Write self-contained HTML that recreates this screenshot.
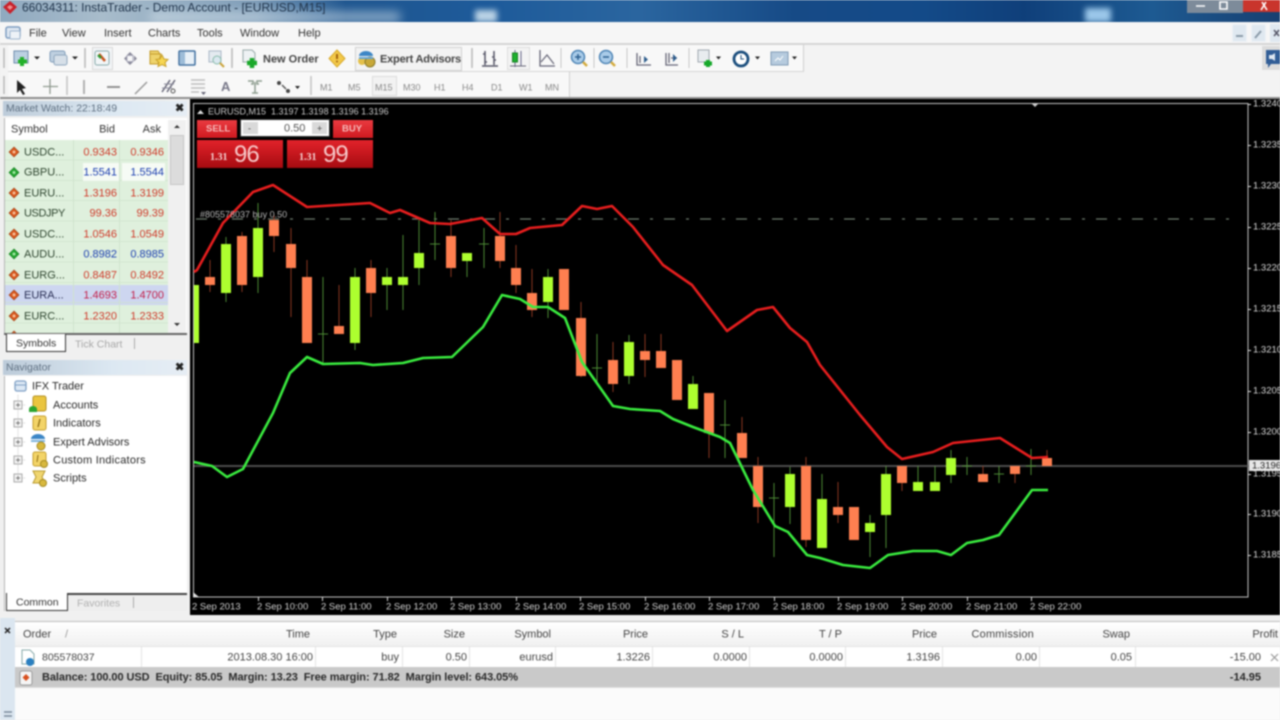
<!DOCTYPE html>
<html><head><meta charset="utf-8"><title>InstaTrader</title>
<style>
html,body{margin:0;padding:0;width:1280px;height:720px;overflow:hidden;background:#f2f2f2}
#w{position:absolute;left:0;top:0;width:1280px;height:720px;overflow:hidden;filter:blur(.7px);font-family:"Liberation Sans",sans-serif;font-size:11px;color:#333;background:#f2f2f2}
.b{position:absolute}
.t{position:absolute;white-space:nowrap;line-height:12px}
.c{transform:translateY(-5.5px)}
svg{position:absolute;left:0;top:0}
</style></head><body><div id="w">

<!-- title bar -->
<div class="b" style="left:0;top:0;width:1280px;height:22px;background:linear-gradient(90deg,#8fa9bf 0,#a8bccb 8%,#7f9db8 20%,#1f568f 27%,#1d5a9a 38%,#2a659f 50%,#164a86 62%,#134a88 72%,#0f3f7a 80%,#1d5a92 90%,#173f70 100%)"></div>
<div class="b" style="left:150px;top:12px;width:250px;height:10px;background:#d9e6ee;filter:blur(5px);opacity:.6"></div>
<div class="b" style="left:475px;top:10px;width:22px;height:12px;background:#bcd4e6;filter:blur(3px)"></div>
<div class="b" style="left:1085px;top:8px;width:26px;height:14px;background:#9cc8ea;filter:blur(3px)"></div>
<div class="b" style="left:1187px;top:0;width:56px;height:13px;background:#7d8b9a"></div>
<div class="b" style="left:1243px;top:0;width:37px;height:12px;background:#c9352c"></div>
<svg width="1280" height="22">
<path d="M10 1l7 6-7 7-7-7z" fill="#c8202a"/><path d="M10 5l3 2-3 3-3-3z" fill="#ef8d8d"/>
<path d="M1196 6h9M1220 2h7v7h-7zM1262 2l5 8M1266 2l-5 8" stroke="#fff" stroke-width="1.6" fill="none"/>
</svg>
<div class="t c" style="left:22px;top:7px;font-size:12px;color:#22364d">66034311: InstaTrader - Demo Account - [EURUSD,M15]</div>

<!-- menu -->
<div class="b" style="left:0;top:22px;width:1280px;height:21px;background:#f6f6f6;border-bottom:2px solid #d5d5d5;box-sizing:content-box"></div>
<div class="t c" style="left:29px;top:33px;font-size:11px">File</div>
<div class="t c" style="left:62px;top:33px;font-size:11px">View</div>
<div class="t c" style="left:104px;top:33px;font-size:11px">Insert</div>
<div class="t c" style="left:148px;top:33px;font-size:11px">Charts</div>
<div class="t c" style="left:197px;top:33px;font-size:11px">Tools</div>
<div class="t c" style="left:240px;top:33px;font-size:11px">Window</div>
<div class="t c" style="left:298px;top:33px;font-size:11px">Help</div>
<div class="b" style="left:1232px;top:24px;width:15px;height:18px;background:#dfe8f0;border:1px solid #eef2f6;box-sizing:border-box"></div>
<div class="b" style="left:1251px;top:24px;width:15px;height:18px;background:#dfe8f0;border:1px solid #eef2f6;box-sizing:border-box"></div>
<div class="b" style="left:1270px;top:24px;width:10px;height:18px;background:#dfe8f0"></div>

<!-- toolbar backgrounds -->
<div class="b" style="left:0;top:45px;width:1280px;height:53px;background:#f3f3f3"></div>
<div class="b" style="left:8px;top:45px;width:796px;height:27px;background:#f8f8f8;border-right:1px solid #cfcfcf;border-bottom:1px solid #d6d6d6;box-sizing:border-box"></div>
<div class="b" style="left:8px;top:72px;width:562px;height:26px;background:#f8f8f8;border-right:1px solid #d0d0d0;box-sizing:border-box"></div>
<div class="b" style="left:0;top:97px;width:1280px;height:2px;background:#8e8e8e"></div>
<div class="b" style="left:355px;top:47px;width:107px;height:24px;background:#f3f3f3;border:1px solid #d2d2d2;box-sizing:border-box"></div>
<div class="b" style="left:92px;top:47px;width:21px;height:23px;background:#f2f4f6;border:1px solid #dadada;box-sizing:border-box"></div>
<div class="b" style="left:507px;top:47px;width:23px;height:23px;background:#f3f3f3;border:1px solid #dcdcdc;box-sizing:border-box"></div>
<div class="b" style="left:372px;top:76px;width:25px;height:20px;background:#f2f2f2;border:1px solid #dcdcdc;box-sizing:border-box"></div>
<div class="b" style="left:1262px;top:46px;width:18px;height:24px;background:#dcdcdc"></div>

<!-- icons -->
<svg width="1280" height="100" fill="none">
<rect x="6" y="27" width="14" height="11" rx="2" stroke="#7d9cc0" stroke-width="1.5" fill="#dfe8f2"/><rect x="10" y="31" width="10" height="8" rx="1" stroke="#9db4cd" fill="#edf2f7"/>
<path d="M4 48V68" stroke="#b8b8b8" stroke-width="1.5"/>
<rect x="14" y="51" width="14" height="12" fill="#bcd0e2" stroke="#6d8cab"/><path d="M22 57v9M18 61.5h9" stroke="#22b02a" stroke-width="4"/>
<path d="M34 56.5h6l-3 3z" fill="#222"/>
<rect x="50" y="51" width="15" height="11" rx="2" fill="#bfd0e0" stroke="#7e9bb8"/><rect x="54" y="55" width="13" height="10" rx="2" fill="#d6dfe8" stroke="#8ea6bd"/>
<path d="M72 56.5h6l-3 3z" fill="#222"/>
<path d="M85 48V68" stroke="#b8b8b8" stroke-width="1.5"/>
<rect x="95" y="51" width="14" height="14" rx="2" stroke="#8aa" fill="#f2f6f8"/><path d="M99 54l6 7" stroke="#c8541e" stroke-width="2.5"/><path d="M98 55l3 3" stroke="#2c9a35" stroke-width="2.5"/>
<path d="M130 52l3 3h-6zM130 65l3-3h-6zM124 58.5l3-3v6zM137 58.5l-3-3v6z" fill="#889"/><rect x="127" y="55.5" width="6" height="6" stroke="#aab"/>
<path d="M150 51h8l2 3h-10zM150 54h11l-3 10h-8z" fill="#eed36c" stroke="#c49b2a"/><path d="M162 55l2 4 4 .5-3 3 1 4-4-2-4 2 1-4-3-3 4-.5z" fill="#f6d652" stroke="#c8a02a"/>
<rect x="179" y="51" width="16" height="14" rx="1" fill="#e8f0f7" stroke="#3f6f9f" stroke-width="1.5"/><rect x="180" y="52" width="5" height="12" fill="#9dbcd8"/>
<rect x="209" y="51" width="12" height="11" fill="#e4eaf0" stroke="#a9b8c6"/><circle cx="217" cy="60" r="4" stroke="#8ba" fill="#dbe8f0"/><path d="M220 63l4 4" stroke="#c9a23a" stroke-width="2"/>
<path d="M232 48V68" stroke="#b8b8b8" stroke-width="1.5"/>
<path d="M243 50h9l3 3v9h-12z" fill="#eef2f4" stroke="#9aa"/><path d="M252 58v10M247 63h10" stroke="#1aa82a" stroke-width="4.5"/>
<path d="M337 50l8 8.5-8 8.5-8-8.5z" fill="#f2c84a" stroke="#d8a928"/><path d="M337 54v5" stroke="#a0620c" stroke-width="2"/><circle cx="337" cy="61.5" r="1" fill="#a0620c"/>
<path d="M359 56a7 5 0 0 1 14 0z" fill="#3c86c6"/><circle cx="362" cy="61" r="4" fill="#e4c04a"/><circle cx="370" cy="62" r="5" fill="#c8a838" stroke="#8a7a28"/><path d="M359 58h14" stroke="#63a5d8" stroke-width="2"/>
<path d="M472 48V68" stroke="#b8b8b8" stroke-width="1.5"/>
<path d="M485 51v14M483 54h2M485 62h2M494 51v14M492 57h2M494 60h2M482 66h16" stroke="#556" stroke-width="1.5"/>
<path d="M515 50v17M521 51v15" stroke="#668"/><rect x="512.5" y="53" width="5" height="9" fill="#1db12d" stroke="#167f22"/><path d="M510 66h16" stroke="#667"/>
<path d="M540 50v16h15" stroke="#667" stroke-width="1.3"/><path d="M541 62l6-7 7 9" stroke="#667" stroke-width="1.2"/>
<path d="M561 48V68M594 48V68M627 48V68M689 48V68" stroke="#c6c6c6"/>
<circle cx="578" cy="57" r="6.5" fill="#a9cbe8" stroke="#4d84b5" stroke-width="1.5"/><path d="M575 57h6M578 54v6" stroke="#2b5f8f" stroke-width="1.5"/><path d="M583 62l4 4" stroke="#d3aa3c" stroke-width="2.5"/>
<circle cx="606" cy="57" r="6.5" fill="#a9cbe8" stroke="#4d84b5" stroke-width="1.5"/><path d="M603 57h6" stroke="#2b5f8f" stroke-width="1.5"/><path d="M611 62l4 4" stroke="#d3aa3c" stroke-width="2.5"/>
<path d="M637 53v12h14M640 56v7" stroke="#667" stroke-width="1.3"/><path d="M644 56l4 3.5-4 3.5z" fill="#2d5c8c"/>
<path d="M666 53v12h12M669 53v10M671 58h6" stroke="#667" stroke-width="1.3"/><path d="M673 54l4 4-4 4z" fill="#2d5c8c"/>
<rect x="698" y="50" width="11" height="12" fill="#e8ecef" stroke="#a0a8b0"/><path d="M708 60v7M704 63.5h8" stroke="#16a82a" stroke-width="4"/>
<path d="M716 56.5h5l-2.5 3z" fill="#222"/>
<circle cx="741" cy="59" r="7" fill="#fff" stroke="#1b4e7d" stroke-width="2.8"/><path d="M741 55v4h3" stroke="#1b4e7d"/>
<path d="M755 56.5h5l-2.5 3z" fill="#222"/>
<rect x="771" y="52" width="17" height="13" fill="#b6cbde" stroke="#7f9ab4"/><path d="M775 61l3-3 2 2 3-4" stroke="#fff"/>
<path d="M792 56.5h5l-2.5 3z" fill="#222"/>
<path d="M4 76V94" stroke="#b8b8b8" stroke-width="1.5"/>
<path d="M17 80l0 13 3-3 3 5 2-1-3-5 4-1z" fill="#222"/>
<path d="M50 79v15M43 86.5h15" stroke="#8f9a8f" stroke-width="1.3"/>
<path d="M67 76V95" stroke="#c2c2c2" stroke-width="1.5"/>
<path d="M84 80v14" stroke="#aaa" stroke-width="1.8"/>
<path d="M107 87h13" stroke="#888" stroke-width="1.8"/>
<path d="M135 94l12-12" stroke="#999" stroke-width="1.5"/>
<path d="M162 92l8-12M167 92l8-12" stroke="#667" stroke-width="1.5"/><path d="M162 88h10M164 84h10" stroke="#889"/><circle cx="173" cy="91" r="2" stroke="#555"/>
<path d="M191 80h14M191 84h14M191 88h14M191 92h8" stroke="#bdbdbd" stroke-width="1.5"/><path d="M201 92h5l-2.5 3z" fill="#667"/>
<path d="M248 81h5v3h-2M262 81h-5v3h2M255 82v11M252 93h6" stroke="#8e9d90" stroke-width="1.5"/>
<circle cx="279" cy="83" r="2" fill="#444"/><circle cx="288" cy="91" r="2" fill="#444"/><path d="M282 85l4 4" stroke="#555" stroke-width="1.5"/>
<path d="M295 86h5l-2.5 3z" fill="#222"/>
<path d="M311 76V95" stroke="#c2c2c2" stroke-width="1.5"/>
<path d="M1266 50h14v14h-9l-3 4v-4h-2z" fill="#315d96"/><path d="M1269 55h3l3-2v8l-3-2h-3z" fill="#dfe8f2"/>
<path d="M1236 36h7M1255 38l6-7" stroke="#8a9aa8" stroke-width="2"/><path d="M1274 30l5 6M1279 30l-5 6" stroke="#556" stroke-width="1.5"/>
</svg>
<div class="t c" style="left:263px;top:59px;font-size:11px;font-weight:bold;color:#444">New Order</div>
<div class="t c" style="left:380px;top:59px;font-size:11px;font-weight:bold;color:#444;letter-spacing:-.2px">Expert Advisors</div>
<div class="t c" style="left:225px;top:87px;font-size:13px;font-weight:bold;color:#778;transform:translate(-4px,-6px)">A</div>
<div class="t c" style="left:320px;top:87px;font-size:9px;color:#888">M1</div>
<div class="t c" style="left:348px;top:87px;font-size:9px;color:#888">M5</div>
<div class="t c" style="left:375px;top:87px;font-size:9px;color:#888">M15</div>
<div class="t c" style="left:403px;top:87px;font-size:9px;color:#888">M30</div>
<div class="t c" style="left:434px;top:87px;font-size:9px;color:#888">H1</div>
<div class="t c" style="left:462px;top:87px;font-size:9px;color:#888">H4</div>
<div class="t c" style="left:491px;top:87px;font-size:9px;color:#888">D1</div>
<div class="t c" style="left:519px;top:87px;font-size:9px;color:#888">W1</div>
<div class="t c" style="left:545px;top:87px;font-size:9px;color:#888">MN</div>

<!-- market watch -->
<div class="b" style="left:0;top:99px;width:190px;height:521px;background:#f0f0f0"></div>
<div class="b" style="left:3px;top:101px;width:184px;height:15px;background:linear-gradient(90deg,#bccbd9,#dce8f2 60%,#e6edf4)"></div>
<div class="t c" style="left:6px;top:108px;font-size:10.5px;color:#5f7082">Market Watch: 22:18:49</div>
<div class="t c" style="left:175px;top:108px;font-size:11px;font-weight:bold;color:#222">&#10006;</div>
<div class="b" style="left:4px;top:118px;width:183px;height:217px;background:#fff;border-left:1px solid #b5b5b5;box-sizing:border-box"></div>
<div class="t c" style="left:11px;top:129px">Symbol</div>
<div class="t c" style="right:1165px;top:129px">Bid</div>
<div class="t c" style="right:1119px;top:129px">Ask</div>
<div class="b" style="left:5px;top:140px;width:163px;height:195px;background:#dff0dd"></div>
<div class="b" style="left:5px;top:285px;width:163px;height:20px;background:#cdd6f0"></div>
<div class="b" style="left:5px;top:140px;width:163px;height:195px;background:repeating-linear-gradient(180deg,transparent 0,transparent 19.4px,#cfe3cd 19.4px,#cfe3cd 20.4px);opacity:.8"></div>
<div class="b" style="left:73px;top:140px;width:1px;height:195px;background:#cfe3cd"></div>
<div class="b" style="left:119px;top:140px;width:1px;height:195px;background:#cfe3cd"></div>
<div class="b" style="left:168px;top:120px;width:18px;height:214px;background:#f0f0f0"></div>
<div class="b" style="left:170px;top:135px;width:14px;height:50px;background:#dcdcdc;border:1px solid #c6c6c6;box-sizing:border-box"></div>
<svg width="190" height="340" fill="none">
<path d="M174 128l3-3 3 3zM174 323l3 3 3-3z" fill="#333"/>
<g fill="#d9581e" stroke="#9a3a12" stroke-width=".6">
<path d="M14 147l5 5-5 5-5-5z"/><path d="M14 188l5 5-5 5-5-5z"/><path d="M14 208l5 5-5 5-5-5z"/><path d="M14 229l5 5-5 5-5-5z"/><path d="M14 270l5 5-5 5-5-5z"/><path d="M14 290l5 5-5 5-5-5z"/><path d="M14 311l5 5-5 5-5-5z"/><path d="M14 331l4 4h-8z"/>
</g>
<g fill="#23a52f" stroke="#137a1e" stroke-width=".6"><path d="M14 167.5l5 5-5 5-5-5z"/><path d="M14 249l5 5-5 5-5-5z"/></g>
<g fill="#f5c09a"><circle cx="14" cy="152" r="1.5"/><circle cx="14" cy="193" r="1.5"/><circle cx="14" cy="213" r="1.5"/><circle cx="14" cy="234" r="1.5"/><circle cx="14" cy="275" r="1.5"/><circle cx="14" cy="295" r="1.5"/><circle cx="14" cy="316" r="1.5"/></g>
<g fill="#a6e8a6"><circle cx="14" cy="172.5" r="1.5"/><circle cx="14" cy="254" r="1.5"/></g>
</svg>
<div class="t c" style="left:24px;top:152px;font-size:11px;color:#2f4630">USDC...</div>
<div class="t c" style="left:24px;top:172px;font-size:11px;color:#2f4630">GBPU...</div>
<div class="t c" style="left:24px;top:193px;font-size:11px;color:#2f4630">EURU...</div>
<div class="t c" style="left:24px;top:213px;font-size:11px;color:#2f4630;letter-spacing:-.4px">USDJPY</div>
<div class="t c" style="left:24px;top:234px;font-size:11px;color:#2f4630">USDC...</div>
<div class="t c" style="left:24px;top:254px;font-size:11px;color:#2f4630">AUDU...</div>
<div class="t c" style="left:24px;top:275px;font-size:11px;color:#2f4630">EURG...</div>
<div class="t c" style="left:24px;top:295px;font-size:11px;color:#2a2f55">EURA...</div>
<div class="t c" style="left:24px;top:316px;font-size:11px;color:#2f4630">EURC...</div>
<div class="b" style="left:83px;top:163px;width:36px;height:18px;background:#fff;opacity:.7"></div>
<div class="b" style="left:122px;top:163px;width:43px;height:18px;background:#fff;opacity:.7"></div>
<div class="t c" style="right:1163px;top:152px;color:#cf3a2a">0.9343</div><div class="t c" style="right:1116px;top:152px;color:#cf3a2a">0.9346</div>
<div class="t c" style="right:1163px;top:172px;color:#1c3fb0">1.5541</div><div class="t c" style="right:1116px;top:172px;color:#1c3fb0">1.5544</div>
<div class="t c" style="right:1163px;top:193px;color:#cf3a2a">1.3196</div><div class="t c" style="right:1116px;top:193px;color:#cf3a2a">1.3199</div>
<div class="t c" style="right:1163px;top:213px;color:#cf3a2a">99.36</div><div class="t c" style="right:1116px;top:213px;color:#cf3a2a">99.39</div>
<div class="t c" style="right:1163px;top:234px;color:#cf3a2a">1.0546</div><div class="t c" style="right:1116px;top:234px;color:#cf3a2a">1.0549</div>
<div class="t c" style="right:1163px;top:254px;color:#1c3fb0">0.8982</div><div class="t c" style="right:1116px;top:254px;color:#1c3fb0">0.8985</div>
<div class="t c" style="right:1163px;top:275px;color:#cf3a2a">0.8487</div><div class="t c" style="right:1116px;top:275px;color:#cf3a2a">0.8492</div>
<div class="t c" style="right:1163px;top:295px;color:#c21f4a">1.4693</div><div class="t c" style="right:1116px;top:295px;color:#c21f4a">1.4700</div>
<div class="t c" style="right:1163px;top:316px;color:#cf3a2a">1.2320</div><div class="t c" style="right:1116px;top:316px;color:#cf3a2a">1.2333</div>
<!-- MW tabs -->
<div class="b" style="left:4px;top:333px;width:183px;height:2px;background:#666"></div>
<div class="b" style="left:0;top:335px;width:190px;height:22px;background:#f0f0f0"></div>
<div class="b" style="left:6px;top:334px;width:60px;height:18px;background:#fff;border:1px solid #333;border-top:0;box-sizing:border-box"></div>
<div class="t c" style="left:16px;top:343px;font-size:10.5px">Symbols</div>
<div class="t c" style="left:75px;top:344px;font-size:10.5px;color:#a8a8a8">Tick Chart</div>
<div class="b" style="left:134px;top:338px;width:1px;height:11px;background:#aaa"></div>
<!-- navigator -->
<div class="b" style="left:3px;top:360px;width:184px;height:15px;background:linear-gradient(90deg,#bccbd9,#dce8f2 60%,#e6edf4)"></div>
<div class="t c" style="left:6px;top:367px;font-size:10.5px;color:#5f7082">Navigator</div>
<div class="t c" style="left:175px;top:367px;font-size:11px;font-weight:bold;color:#222">&#10006;</div>
<div class="b" style="left:4px;top:376px;width:183px;height:235px;background:#fff;border-left:1px solid #b5b5b5;box-sizing:border-box"></div>
<svg width="190" height="500" fill="none" style="left:0;top:0">
<path d="M18 395V478M18 405h8M18 423h8M18 442h8M18 460h8M18 478h8" stroke="#c8c8c8" stroke-dasharray="1 1"/>
<g fill="#f2f2f2" stroke="#aaa"><rect x="14" y="401" width="8" height="8"/><rect x="14" y="419" width="8" height="8"/><rect x="14" y="438" width="8" height="8"/><rect x="14" y="456" width="8" height="8"/><rect x="14" y="474" width="8" height="8"/></g>
<path d="M16 405h4M18 403v4M16 423h4M18 421v4M16 442h4M18 440v4M16 460h4M18 458v4M16 478h4M18 476v4" stroke="#777"/>
<rect x="15" y="381" width="11" height="10" rx="2" fill="#dce8f4" stroke="#7e9fc4" stroke-width="1.3"/><path d="M15 385h11" stroke="#7e9fc4"/>
<rect x="33" y="396" width="13" height="15" rx="2" fill="#eac53f" stroke="#b3901e"/><path d="M29 409a4 3 0 0 1 8 0v3h-8z" fill="#2aa52f"/>
<rect x="33" y="416" width="13" height="14" rx="2" fill="#f3d468" stroke="#c5a02d"/><path d="M40 419l-2 8" stroke="#8a6a10" stroke-width="1.3"/>
<path d="M31 439a7 5 0 0 1 14 0z" fill="#3c86c6"/><path d="M31 441h14" stroke="#7eb4dd" stroke-width="2"/><circle cx="41" cy="446" r="4" fill="#d8b83e" stroke="#a58a20"/>
<rect x="33" y="452" width="13" height="14" rx="2" fill="#f3d468" stroke="#c5a02d"/><circle cx="44" cy="464" r="3.5" fill="#d8b83e" stroke="#a58a20"/><path d="M38 455l-1 7" stroke="#8a6a10"/>
<path d="M33 471h12l-3 6 3 6H33l3-6z" fill="#f0d670" stroke="#b99a2e"/><circle cx="43" cy="483" r="3.5" fill="#d8b83e" stroke="#a58a20"/>
</svg>
<div class="t c" style="left:32px;top:386px;font-size:11px;color:#2a2a2a">IFX Trader</div>
<div class="t c" style="left:53px;top:405px;font-size:11px;color:#2a2a2a">Accounts</div>
<div class="t c" style="left:53px;top:423px;font-size:11px;color:#2a2a2a">Indicators</div>
<div class="t c" style="left:53px;top:442px;font-size:11px;color:#2a2a2a">Expert Advisors</div>
<div class="t c" style="left:53px;top:460px;font-size:11px;color:#2a2a2a;letter-spacing:.25px">Custom Indicators</div>
<div class="t c" style="left:53px;top:478px;font-size:11px;color:#2a2a2a">Scripts</div>
<div class="b" style="left:67px;top:593px;width:120px;height:2px;background:#444"></div>
<div class="b" style="left:68px;top:595px;width:119px;height:16px;background:#eeeeee"></div>
<div class="b" style="left:6px;top:593px;width:62px;height:18px;background:#fff;border:1px solid #333;border-top:0;box-sizing:border-box"></div>
<div class="t c" style="left:16px;top:602px;font-size:10.5px">Common</div>
<div class="t c" style="left:77px;top:603px;font-size:10.5px;color:#b0b0b0">Favorites</div>
<div class="b" style="left:133px;top:597px;width:1px;height:11px;background:#aaa"></div>

<!-- chart -->
<div class="b" style="left:190px;top:99px;width:1090px;height:516px;background:#000"></div>
<svg width="1280" height="620" fill="none">
<path d="M193.5 103.5H1248V597H193.5z" stroke="#c4c4c4"/>
<path d="M197 114l3.5-4 3.5 4z" fill="#ddd"/>
<path d="M1031 103h8l-4 4z" fill="#ccc"/><path d="M193 592l6 5h-6z" fill="#ddd"/>
<path d="M196 219H1240" stroke="#6d7a6d" stroke-width="1.3" stroke-dasharray="11 11 3 11"/>
<path d="M194 466H1248" stroke="#4c4c4c" stroke-width="2"/>
<path stroke="#8a3520" d="M210 260V292M242 232V292M274 215V252M291 228V317M307 260V343M339 285V334M371 260V317M451 220V277M500 212V268M516 245V293M532 269V317M581 302V377M613 342V392M645 334V377M661 334V368M677 360V400M709 393V458M742 417V458M758 457V523M806 457V547M838 482V523M902 466V491M983 466V482M1015 466V483M1047 450V466"/>
<path stroke="#4c8a34" d="M226 237V302M258 203V293M323 277V363M355 268V350M387 268V310M403 235V310M419 220V285M435 212V260M467 253V277M484 228V268M548 269V318M597 334V383M629 335V384M693 376V409M725 400V458M774 483V557M790 467V524M822 474V548M870 515V557M886 466V548M918 466V491M935 466V491M951 450V483M967 457V475M999 466V483M1031 449V475M318 334h10M430 244h10M479 244h10M592 368h10M720 425h10M769 498h10M962 466h10M994 474h10M1026 466h10"/>
<path fill="#ff7f50" d="M205 277h10V285h-10zM237 236h10V285h-10zM269 220h10V236h-10zM286 244h10V268h-10zM302 277h10V343h-10zM334 326h10V334h-10zM366 268h10V293h-10zM446 236h10V268h-10zM495 236h10V261h-10zM511 268h10V285h-10zM527 293h10V310h-10zM559 269h10V310h-10zM576 318h10V376h-10zM608 360h10V384h-10zM640 351h10V360h-10zM656 351h10V368h-10zM672 360h10V400h-10zM704 393h10V433h-10zM737 433h10V458h-10zM753 466h10V507h-10zM801 466h10V540h-10zM833 507h10V515h-10zM849 507h10V540h-10zM897 466h10V483h-10zM978 474h10V482h-10zM1010 466h10V474h-10zM1042 458h10V466h-10z"/>
<path fill="#adff2f" d="M194 285h5V343h-5zM221 244h10V293h-10zM253 228h10V277h-10zM350 277h10V343h-10zM382 277h10V285h-10zM398 277h10V285h-10zM414 253h10V268h-10zM462 253h10V261h-10zM543 277h10V302h-10zM624 342h10V376h-10zM688 384h10V409h-10zM785 474h10V507h-10zM817 499h10V548h-10zM865 523h10V532h-10zM881 474h10V515h-10zM913 482h10V491h-10zM930 482h10V491h-10zM946 458h10V475h-10z"/>
<polyline stroke-width="2.6" stroke="#e81e1e" stroke-linejoin="round" points="194,272 197,270 223,223 253,192 273,185 307,207 370,203 390,213 400,210 430,223 450,224 482,218 500,234 516,234 530,228 562,225 582,206 597,209 612,206 633,227 663,265 692,285 727,331 757,310 773,307 790,328 807,342 820,365 848,400 860,415 887,447 902,459 933,452 953,443 1000,438 1032,458 1048,457"/>
<polyline stroke-width="2.6" stroke="#3aec3f" stroke-linejoin="round" points="194,462 212,466 227,477 243,469 273,413 290,373 307,357 323,364 360,363 373,365 403,363 423,358 452,357 483,327 502,295 520,299 533,307 548,307 565,318 582,362 613,406 630,409 660,411 673,419 693,427 720,437 730,443 753,490 775,526 788,532 807,555 820,558 843,565 870,568 888,555 913,551 937,551 951,555 967,543 983,540 999,535 1032,490 1048,490"/>
<path stroke="#ddd" d="M1248 104.5h3M1248 145.5h3M1248 186.5h3M1248 227.5h3M1248 268.5h3M1248 309.5h3M1248 350.5h3M1248 391.5h3M1248 432.5h3M1248 474.5h3M1248 514.5h3M1248 555.5h3M258.5 597v4M322.5 597v4M387.5 597v4M451.5 597v4M516.5 597v4M580.5 597v4M645.5 597v4M709.5 597v4M774.5 597v4M838.5 597v4M902.5 597v4M967.5 597v4M1031.5 597v4"/>
</svg>
<div class="t c" style="left:208px;top:111px;font-size:9px;color:#c8c8c8">EURUSD,M15 &nbsp;1.3197 1.3198 1.3196 1.3196</div>
<div class="t c" style="left:200px;top:214px;font-size:9px;color:#b5b5b5">#805578037 buy 0.50</div>
<div class="t c" style="left:1253px;top:104px;font-size:9.5px;color:#d8d8d8">1.3240</div>
<div class="t c" style="left:1253px;top:145px;font-size:9.5px;color:#d8d8d8">1.3235</div>
<div class="t c" style="left:1253px;top:186px;font-size:9.5px;color:#d8d8d8">1.3230</div>
<div class="t c" style="left:1253px;top:227px;font-size:9.5px;color:#d8d8d8">1.3225</div>
<div class="t c" style="left:1253px;top:268px;font-size:9.5px;color:#d8d8d8">1.3220</div>
<div class="t c" style="left:1253px;top:309px;font-size:9.5px;color:#d8d8d8">1.3215</div>
<div class="t c" style="left:1253px;top:350px;font-size:9.5px;color:#d8d8d8">1.3210</div>
<div class="t c" style="left:1253px;top:391px;font-size:9.5px;color:#d8d8d8">1.3205</div>
<div class="t c" style="left:1253px;top:432px;font-size:9.5px;color:#d8d8d8">1.3200</div>
<div class="t c" style="left:1253px;top:474px;font-size:9.5px;color:#d8d8d8">1.3195</div>
<div class="t c" style="left:1253px;top:514px;font-size:9.5px;color:#d8d8d8">1.3190</div>
<div class="t c" style="left:1253px;top:555px;font-size:9.5px;color:#d8d8d8">1.3185</div>
<div class="b" style="left:1249px;top:460px;width:31px;height:11px;background:#e8e8e8"></div>
<div class="t c" style="left:1252px;top:466px;font-size:9.5px;color:#222">1.3196</div>
<div class="t c" style="left:192px;top:607px;font-size:9.5px;color:#d0d0d0">2 Sep 2013</div>
<div class="t c" style="left:257px;top:607px;font-size:9.5px;color:#d0d0d0">2 Sep 10:00</div>
<div class="t c" style="left:321px;top:607px;font-size:9.5px;color:#d0d0d0">2 Sep 11:00</div>
<div class="t c" style="left:386px;top:607px;font-size:9.5px;color:#d0d0d0">2 Sep 12:00</div>
<div class="t c" style="left:450px;top:607px;font-size:9.5px;color:#d0d0d0">2 Sep 13:00</div>
<div class="t c" style="left:515px;top:607px;font-size:9.5px;color:#d0d0d0">2 Sep 14:00</div>
<div class="t c" style="left:579px;top:607px;font-size:9.5px;color:#d0d0d0">2 Sep 15:00</div>
<div class="t c" style="left:644px;top:607px;font-size:9.5px;color:#d0d0d0">2 Sep 16:00</div>
<div class="t c" style="left:708px;top:607px;font-size:9.5px;color:#d0d0d0">2 Sep 17:00</div>
<div class="t c" style="left:773px;top:607px;font-size:9.5px;color:#d0d0d0">2 Sep 18:00</div>
<div class="t c" style="left:837px;top:607px;font-size:9.5px;color:#d0d0d0">2 Sep 19:00</div>
<div class="t c" style="left:901px;top:607px;font-size:9.5px;color:#d0d0d0">2 Sep 20:00</div>
<div class="t c" style="left:966px;top:607px;font-size:9.5px;color:#d0d0d0">2 Sep 21:00</div>
<div class="t c" style="left:1030px;top:607px;font-size:9.5px;color:#d0d0d0">2 Sep 22:00</div>
<!-- one click panel -->
<div class="b" style="left:197px;top:120px;width:40px;height:18px;background:linear-gradient(#ea3a40,#cf1a20)"></div>
<div class="t c" style="left:206px;top:129px;font-size:9.5px;font-weight:bold;color:#f4b9b9">SELL</div>
<div class="b" style="left:240px;top:119px;width:90px;height:18px;background:#fff;border:1px solid #333;box-sizing:border-box"></div>
<div class="b" style="left:243px;top:122px;width:15px;height:12px;background:#d9d9d9"></div>
<div class="b" style="left:312px;top:122px;width:15px;height:12px;background:#d9d9d9"></div>
<div class="t c" style="left:284px;top:128px;font-size:11px;color:#555">0.50</div>
<div class="t c" style="left:248px;top:128px;font-size:9px;color:#444">-</div>
<div class="t c" style="left:317px;top:128px;font-size:9px;color:#444">+</div>
<div class="b" style="left:333px;top:120px;width:40px;height:18px;background:linear-gradient(#ea3a40,#cf1a20)"></div>
<div class="t c" style="left:342px;top:129px;font-size:9.5px;font-weight:bold;color:#f4b9b9">BUY</div>
<div class="b" style="left:197px;top:140px;width:86px;height:28px;background:linear-gradient(#e2222a,#a60b10)"></div>
<div class="b" style="left:287px;top:140px;width:86px;height:28px;background:linear-gradient(#e2222a,#a60b10)"></div>
<div class="t" style="left:210px;top:152px;font-size:10px;font-weight:bold;color:#f5d5d5;font-family:'Liberation Serif',serif">1.31</div>
<div class="t" style="left:234px;top:143px;font-size:24px;line-height:24px;color:#f7c9c9;letter-spacing:-1px">96</div>
<div class="t" style="left:299px;top:152px;font-size:10px;font-weight:bold;color:#f5d5d5;font-family:'Liberation Serif',serif">1.31</div>
<div class="t" style="left:323px;top:143px;font-size:24px;line-height:24px;color:#f7c9c9;letter-spacing:-1px">99</div>

<!-- terminal -->
<div class="b" style="left:0;top:615px;width:1280px;height:105px;background:#f0f0f0"></div>
<div class="b" style="left:0;top:618px;width:15px;height:102px;background:#dbe6f0"></div>
<div class="b" style="left:15px;top:621px;width:1265px;height:99px;background:#fbfbfb;border-top:1px solid #bdbdbd;box-sizing:border-box"></div>
<div class="b" style="left:15px;top:622px;width:1265px;height:24px;background:linear-gradient(#fff,#f0f0f0)"></div>
<div class="b" style="left:15px;top:646px;width:1265px;height:21px;background:#fff;border-top:1px solid #e2e2e2;box-sizing:border-box"></div>
<div class="b" style="left:15px;top:667px;width:1265px;height:21px;background:#c9c9c9;border-bottom:1px solid #ddd;box-sizing:border-box"></div>
<div class="b" style="left:141px;top:646px;width:1px;height:21px;background:#e4e4e4"></div>
<div class="b" style="left:315px;top:646px;width:1px;height:21px;background:#e4e4e4"></div>
<div class="b" style="left:402px;top:646px;width:1px;height:21px;background:#e4e4e4"></div>
<div class="b" style="left:469px;top:646px;width:1px;height:21px;background:#e4e4e4"></div>
<div class="b" style="left:555px;top:646px;width:1px;height:21px;background:#e4e4e4"></div>
<div class="b" style="left:652px;top:646px;width:1px;height:21px;background:#e4e4e4"></div>
<div class="b" style="left:749px;top:646px;width:1px;height:21px;background:#e4e4e4"></div>
<div class="b" style="left:845px;top:646px;width:1px;height:21px;background:#e4e4e4"></div>
<div class="b" style="left:942px;top:646px;width:1px;height:21px;background:#e4e4e4"></div>
<div class="b" style="left:1039px;top:646px;width:1px;height:21px;background:#e4e4e4"></div>
<div class="b" style="left:1135px;top:646px;width:1px;height:21px;background:#e4e4e4"></div>
<svg width="1280" height="720" fill="none">
<path d="M22 650h8l4 4v10H22z" fill="#fff" stroke="#8aa"/><circle cx="30" cy="662" r="4" fill="#2a7fc0"/>
<rect x="20" y="671" width="12" height="14" rx="2" fill="#f5f5f5" stroke="#999"/><path d="M26 674l3.5 3.5-3.5 3.5-3.5-3.5z" fill="#d8501e"/>
<path d="M5 628l5 5M10 628l-5 5" stroke="#222" stroke-width="1.5"/>
<path d="M4 712h8M4 716h8" stroke="#7a8a9a" stroke-width="1.5"/>
<path d="M1271 654l7 7M1278 654l-7 7" stroke="#999" stroke-width="1.2"/>
</svg>
<div class="t c" style="left:23px;top:634px;color:#444">Order</div><div class="t c" style="left:65px;top:634px;color:#999">/</div>
<div class="t c" style="right:970px;top:634px;color:#444">Time</div>
<div class="t c" style="right:883px;top:634px;color:#444">Type</div>
<div class="t c" style="right:815px;top:634px;color:#444">Size</div>
<div class="t c" style="right:729px;top:634px;color:#444">Symbol</div>
<div class="t c" style="right:632px;top:634px;color:#444">Price</div>
<div class="t c" style="right:536px;top:634px;color:#444">S / L</div>
<div class="t c" style="right:438px;top:634px;color:#444">T / P</div>
<div class="t c" style="right:343px;top:634px;color:#444">Price</div>
<div class="t c" style="right:246px;top:634px;color:#444;letter-spacing:.2px">Commission</div>
<div class="t c" style="right:150px;top:634px;color:#444">Swap</div>
<div class="t c" style="right:2px;top:634px;color:#444">Profit</div>
<div class="t c" style="left:42px;top:657px;color:#444;font-size:10.5px">805578037</div>
<div class="t c" style="right:967px;top:657px;color:#444">2013.08.30 16:00</div>
<div class="t c" style="right:881px;top:657px;color:#444">buy</div>
<div class="t c" style="right:813px;top:657px;color:#444">0.50</div>
<div class="t c" style="right:727px;top:657px;color:#444">eurusd</div>
<div class="t c" style="right:630px;top:657px;color:#444">1.3226</div>
<div class="t c" style="right:533px;top:657px;color:#444">0.0000</div>
<div class="t c" style="right:437px;top:657px;color:#444">0.0000</div>
<div class="t c" style="right:340px;top:657px;color:#444">1.3196</div>
<div class="t c" style="right:243px;top:657px;color:#444">0.00</div>
<div class="t c" style="right:148px;top:657px;color:#444">0.05</div>
<div class="t c" style="right:19px;top:657px;color:#444">-15.00</div>
<div class="t c" style="left:42px;top:677px;font-weight:bold;color:#2a2a2a;letter-spacing:-.07px">Balance: 100.00 USD&nbsp; Equity: 85.05&nbsp; Margin: 13.23&nbsp; Free margin: 71.82&nbsp; Margin level: 643.05%</div>
<div class="t c" style="right:19px;top:677px;font-weight:bold;color:#2a2a2a">-14.95</div>
</div></body></html>
